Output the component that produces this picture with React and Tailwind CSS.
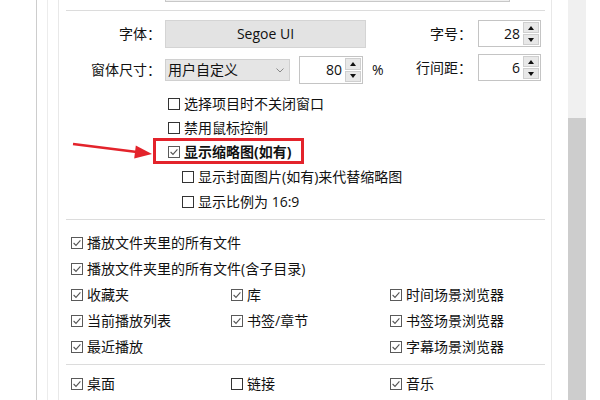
import React from "react";

function Box({ checked }) {
  return (
    <span
      className={
        "flex h-[12px] w-[12px] shrink-0 items-center justify-center border bg-white " +
        (checked ? "border-[#5a5a5a]" : "border-[#333]")
      }
    >
      {checked && (
        <svg width="10" height="10" viewBox="0 0 10 10">
          <path d="M1.6 5 L4 7.4 L8.4 2.4" fill="none" stroke="#555" strokeWidth="1.1" />
        </svg>
      )}
    </span>
  );
}

function Check({ checked, label, bold }) {
  return (
    <div className="flex items-center gap-[4px]">
      <Box checked={checked} />
      <span className={"whitespace-nowrap " + (bold ? "font-bold" : "")}>{label}</span>
    </div>
  );
}

function Spin({ value, className }) {
  return (
    <div className={"flex border border-[#c4c4c4] bg-white " + className}>
      <div className="flex flex-1 items-center justify-end pr-[2px] text-[14px]">{value}</div>
      <div className="flex w-[18px] flex-col gap-[1px] p-[1px]">
        <div className="flex flex-1 items-center justify-center border border-[#cfcfcf] bg-[#e8e8e8]">
          <svg width="6" height="4" viewBox="0 0 6 4">
            <path d="M0 4 L3 0 L6 4 Z" fill="#111" />
          </svg>
        </div>
        <div className="flex flex-1 items-center justify-center border border-[#cfcfcf] bg-[#e8e8e8]">
          <svg width="6" height="4" viewBox="0 0 6 4">
            <path d="M0 0 L3 4 L6 0 Z" fill="#111" />
          </svg>
        </div>
      </div>
    </div>
  );
}

export default function App() {
  const rows = [
    [{ c: true, t: "收藏夹" }, { c: true, t: "库" }, { c: true, t: "时间场景浏览器" }],
    [{ c: true, t: "当前播放列表" }, { c: true, t: "书签/章节" }, { c: true, t: "书签场景浏览器" }],
    [{ c: true, t: "最近播放" }, null, { c: true, t: "字幕场景浏览器" }],
  ];

  return (
    <div className="relative flex h-[400px] w-[600px] overflow-hidden bg-white font-['Open_Sans','Noto_Sans_CJK_SC',sans-serif] text-[14px] leading-none text-[#111]">
      <div className="w-[36px] shrink-0" />
      <div className="w-[11px] shrink-0 border-l border-[#cdcdcd]" />
      <div className="w-[11px] shrink-0 border-l border-[#ececec]" />

      <div className="flex w-[494px] shrink-0 flex-col border-l border-r border-[#e8e8e8]">
        <div className="ml-[106px] h-[2px] w-[345px] border-x border-b border-[#c8c8c8] bg-[#f0f0f0]" />
        <div className="ml-[7px] mr-[6px] mt-[8px] border-t border-[#dcdcdc]" />

        <div className="mt-[9px] flex">
          <div className="flex flex-col">
            <div className="flex h-[28px] items-center">
              <div className="w-[102px] text-right">字体：</div>
              <div className="ml-[4px] flex h-[28px] w-[201px] items-center justify-center border border-[#d4d4d4] bg-[#e3e3e3]">
                Segoe UI
              </div>
            </div>
            <div className="mt-[8px] flex h-[28px] items-center">
              <div className="w-[102px] text-right">窗体尺寸：</div>
              <div className="ml-[4px] flex h-[22px] w-[125px] items-center justify-between border border-[#d0d0d0] bg-[#e5e5e5] pl-[2px] pr-[5px]">
                <span>用户自定义</span>
                <svg width="8" height="5" viewBox="0 0 8 5">
                  <path d="M0.5 0.5 L4 4 L7.5 0.5" fill="none" stroke="#888" strokeWidth="1" />
                </svg>
              </div>
              <Spin value="80" className="ml-[9px] h-[28px] w-[64px]" />
              <span className="ml-[9px]">%</span>
            </div>
          </div>

          <div className="ml-auto mr-[10px] flex flex-col gap-[7px]">
            <div className="flex h-[27px] items-center">
              <div className="w-[74px] text-right">字号：</div>
              <Spin value="28" className="ml-[6px] h-[27px] w-[63px]" />
            </div>
            <div className="flex h-[27px] items-center">
              <div className="w-[74px] text-right">行间距：</div>
              <Spin value="6" className="ml-[6px] h-[27px] w-[63px]" />
            </div>
          </div>
        </div>

        <div className="mt-[8px] flex flex-col">
          <div className="flex h-[24px] items-center pl-[109px]">
            <Check label="选择项目时不关闭窗口" />
          </div>
          <div className="flex h-[24px] items-center pl-[109px]">
            <Check label="禁用鼠标控制" />
          </div>
          <div className="relative flex h-[24px] items-center pl-[109px]">
            <Check checked bold label="显示缩略图(如有)" />
            <div className="absolute left-[94px] top-[-2px] h-[26px] w-[151px] border-[3px] border-[#e3232b]" />
          </div>
          <div className="flex h-[26px] items-center pl-[123px]">
            <Check label="显示封面图片(如有)来代替缩略图" />
          </div>
          <div className="flex h-[24px] items-center pl-[123px]">
            <Check label="显示比例为 16:9" />
          </div>
        </div>

        <div className="ml-[7px] mr-[6px] mt-[5px] border-t border-[#dcdcdc]" />

        <div className="mt-[10px] flex flex-col">
          <div className="flex h-[26px] items-center pl-[12px]">
            <Check checked label="播放文件夹里的所有文件" />
          </div>
          <div className="flex h-[26px] items-center pl-[12px]">
            <Check checked label="播放文件夹里的所有文件(含子目录)" />
          </div>
          {rows.map((row, i) => (
            <div key={i} className="flex h-[26px] items-center pl-[12px]">
              {row.map((it, j) => (
                <div key={j} className={j === 0 ? "w-[160px]" : j === 1 ? "w-[159px]" : ""}>
                  {it && <Check checked={it.c} label={it.t} />}
                </div>
              ))}
            </div>
          ))}
        </div>

        <div className="ml-[7px] mr-[6px] mt-[4px] border-t border-[#dcdcdc]" />

        <div className="mt-[6px] flex h-[26px] items-center pl-[12px]">
          <div className="w-[160px]">
            <Check checked label="桌面" />
          </div>
          <div className="w-[159px]">
            <Check label="链接" />
          </div>
          <Check checked label="音乐" />
        </div>
      </div>

      <div className="w-[16px] shrink-0" />
      <div className="flex w-[18px] shrink-0 flex-col">
        <div className="h-[118px] bg-[#f0f0f0]" />
        <div className="flex-1 bg-[#cdcdcd]" />
      </div>

      <svg className="absolute left-[70px] top-[136px]" width="90" height="26" viewBox="70 136 90 26">
        <path d="M73 144 L137 152" stroke="#e3232b" strokeWidth="2.6" fill="none" />
        <path d="M152 154 L135.8 145.6 L134.2 158.6 Z" fill="#e3232b" />
      </svg>
    </div>
  );
}
